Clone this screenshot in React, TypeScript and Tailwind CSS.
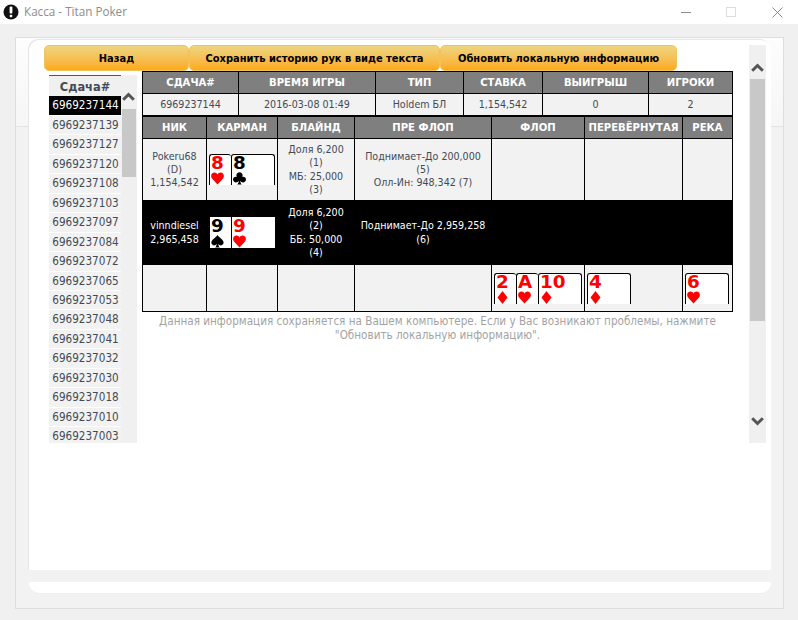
import React from "react";

type Suit = "h" | "d" | "c" | "s";

function SuitIcon({ suit, color }: { suit: Suit; color: string }) {
  const paths: Record<Suit, string> = {
    h: "M6.5 12.5 L1 6.5 C-0.6 4.5 0 1 3 0.6 C4.8 0.4 5.9 1.4 6.5 2.6 C7.1 1.4 8.2 0.4 10 0.6 C13 1 13.6 4.5 12 6.5 Z",
    d: "M6.5 0 L11.5 6.5 L6.5 13 L1.5 6.5 Z",
    c: "M6.5 0.2 C8.4 0.2 9.6 1.6 9.6 3.2 C9.6 3.9 9.4 4.4 9.1 4.9 C11.2 4.2 13 5.6 13 7.5 C13 9.3 11.5 10.4 10 10.4 C8.9 10.4 8 9.9 7.2 9 C7.3 10.4 7.7 11.3 8.8 12.6 L4.2 12.6 C5.3 11.3 5.7 10.4 5.8 9 C5 9.9 4.1 10.4 3 10.4 C1.5 10.4 0 9.3 0 7.5 C0 5.6 1.8 4.2 3.9 4.9 C3.6 4.4 3.4 3.9 3.4 3.2 C3.4 1.6 4.6 0.2 6.5 0.2 Z",
    s: "M6.5 0 C8 2.4 12.6 4.8 12.6 7.6 C12.6 9.4 11.3 10.4 10 10.4 C9 10.4 8 9.9 7.3 9 C7.4 10.4 7.8 11.3 8.8 12.6 L4.2 12.6 C5.2 11.3 5.6 10.4 5.7 9 C5 9.9 4 10.4 3 10.4 C1.7 10.4 0.4 9.4 0.4 7.6 C0.4 4.8 5 2.4 6.5 0 Z",
  };
  return (
    <svg width="13" height="13" viewBox="0 0 13 13" className="block">
      <path d={paths[suit]} fill={color} />
    </svg>
  );
}

function Card({
  rank,
  suit,
  narrow,
  last,
  dark,
}: {
  rank: string;
  suit: Suit;
  narrow?: boolean;
  last?: boolean;
  dark?: boolean;
}) {
  const red = suit === "h" || suit === "d";
  const color = red ? "#ff0000" : "#000000";
  return (
    <div
      className={`h-[31px] shrink-0 overflow-hidden bg-white border-l border-black ${
        last ? "border-r" : ""
      } ${narrow ? "w-[22px]" : "w-[44px]"} ${
        dark ? "pt-[1px]" : "border-t rounded-t-[3px]"
      } pl-[1px]`}
    >
      <div
        className="h-[16px] origin-left scale-x-[1.08] text-left whitespace-nowrap font-['DejaVu_Sans'] text-[17px] leading-[16px] font-bold"
        style={{ color }}
      >
        {rank}
      </div>
      <div className="mt-[1px]">
        <SuitIcon suit={suit} color={color} />
      </div>
    </div>
  );
}

function Chevron({ up }: { up?: boolean }) {
  return (
    <svg width="13" height="9" viewBox="0 0 13 9" className="block">
      <path
        d={up ? "M1.2 7.8 L6.5 2.5 L11.8 7.8" : "M1.2 1.2 L6.5 6.5 L11.8 1.2"}
        fill="none"
        stroke="#555555"
        strokeWidth="3"
      />
    </svg>
  );
}

const ids = [
  "6969237139",
  "6969237127",
  "6969237120",
  "6969237108",
  "6969237103",
  "6969237097",
  "6969237084",
  "6969237072",
  "6969237065",
  "6969237053",
  "6969237048",
  "6969237041",
  "6969237032",
  "6969237030",
  "6969237018",
  "6969237010",
  "6969237003",
];

const th =
  "p-0 border border-black bg-[#7f7f7f] text-white font-bold text-center align-middle text-[11.2px]";
const td = "p-0 border border-black bg-[#f2f2f2] text-center align-middle";
const tdBlack = "p-0 border border-black bg-black text-white text-center align-middle";

function GoldButton({ label, width }: { label: string; width: string }) {
  return (
    <button
      className={`${width} h-[26px] shrink-0 rounded-[5px] border border-[#efc35a] bg-gradient-to-b from-[#edd57f] to-[#fdaa0c] text-black font-bold text-[11px] leading-none`}
    >
      {label}
    </button>
  );
}

export default function App() {
  return (
    <div className="w-[798px] h-[620px] overflow-hidden bg-[#f0f0f0] font-['DejaVu_Sans_Condensed','DejaVu_Sans',sans-serif] text-[10.6px] leading-[13.3px] text-[#444a55]">
      {/* Title bar */}
      <div className="h-[24px] bg-white flex items-center pl-[3px]">
        <svg width="16" height="16" viewBox="0 0 16 16" className="block">
          <circle cx="8" cy="8" r="7.5" fill="#111111" />
          <rect x="6.6" y="2.6" width="2.8" height="7" rx="1" fill="#ffffff" />
          <rect x="6.8" y="10.8" width="2.4" height="2.4" fill="#ffffff" />
        </svg>
        <span className="ml-[5px] font-['Open_Sans',sans-serif] text-[11.7px] text-[#8c8c8c] leading-none">
          Касса - Titan Poker
        </span>
        <div className="ml-auto flex items-center">
          <div className="w-[10px] h-px bg-[#8a8a8a]" />
          <div className="ml-[35px] w-[10px] h-[10px] border border-[#dcdcdc]" />
          <svg width="11" height="11" viewBox="0 0 11 11" className="ml-[36px] mr-[15px] block">
            <path d="M0.5 0.5 L10.5 10.5 M10.5 0.5 L0.5 10.5" stroke="#8a8a8a" strokeWidth="1" />
          </svg>
        </div>
      </div>

      {/* Frame */}
      <div className="mt-[13px] ml-[15px] w-[769px] h-[572px] border border-[#dedede] pt-[2px] pl-[13px] bg-[linear-gradient(#fdfdfd_0,#f6f6f6_88px,#e3e3e3_88px,#e3e3e3_89px,#f2f2f2_89px)]">
        {/* Main panel */}
        <div className="w-[742px] h-[530px] bg-white rounded-t-[10px] pt-[5px] pl-[15px] flex shadow-[-1px_-1px_0_#e6e6e6]">
          <div className="w-[705px] shrink-0">
            <div className="flex h-[26px]">
              <GoldButton label="Назад" width="w-[145px]" />
              <GoldButton label="Сохранить историю рук в виде текста" width="w-[251px]" />
              <GoldButton label="Обновить локальную информацию" width="w-[237px]" />
            </div>
            <div className="flex">
              {/* Hand list */}
              <div className="ml-[5px] mt-[4px] w-[88px] h-[368px] flex overflow-hidden shrink-0 text-[11.6px] leading-[18.44px]">
                <div className="w-[72px]">
                  <div className="h-[21px] bg-[#f0f0f0] border-t border-[#555555] text-center font-bold text-[12.7px] leading-[21px]">
                    Сдача#
                  </div>
                  <div className="h-[19px] bg-black text-white pl-[1px] text-center">6969237144</div>
                  {ids.map((id) => (
                    <div key={id} className="mt-[1px] h-[18.44px] bg-[#f2f2f2] pl-[1px] text-center">
                      {id}
                    </div>
                  ))}
                </div>
                <div className="w-[16px] bg-[#f0f0f0] pt-[17px]">
                  <div className="pl-[1px]">
                    <Chevron up />
                  </div>
                  <div className="mt-[8px] ml-[1px] w-[14px] h-[68px] bg-[#c8c8c8]" />
                </div>
              </div>
              {/* Tables */}
              <div className="ml-[5px] w-[591px] shrink-0">
                <table className="w-[591px] table-fixed border-collapse">
                  <colgroup>
                    <col className="w-[96px]" />
                    <col className="w-[137px]" />
                    <col className="w-[88px]" />
                    <col className="w-[79px]" />
                    <col className="w-[106px]" />
                    <col className="w-[84px]" />
                  </colgroup>
                  <tbody className="[&>tr>*]:pt-[1px]">
                    <tr className="h-[22px]">
                      <th className={th}>СДАЧА#</th>
                      <th className={th}>ВРЕМЯ ИГРЫ</th>
                      <th className={th}>ТИП</th>
                      <th className={th}>СТАВКА</th>
                      <th className={th}>ВЫИГРЫШ</th>
                      <th className={th}>ИГРОКИ</th>
                    </tr>
                    <tr className="h-[22px]">
                      <td className={td}>6969237144</td>
                      <td className={td}>2016-03-08 01:49</td>
                      <td className={td}>Holdem БЛ</td>
                      <td className={td}>1,154,542</td>
                      <td className={td}>0</td>
                      <td className={td}>2</td>
                    </tr>
                  </tbody>
                </table>
                <table className="w-[591px] table-fixed border-collapse">
                  <colgroup>
                    <col className="w-[64px]" />
                    <col className="w-[71px]" />
                    <col className="w-[77px]" />
                    <col className="w-[137px]" />
                    <col className="w-[93px]" />
                    <col className="w-[98px]" />
                    <col className="w-[50px]" />
                  </colgroup>
                  <tbody>
                    <tr className="h-[22px]">
                      <th className={th}>НИК</th>
                      <th className={th}>КАРМАН</th>
                      <th className={th}>БЛАЙНД</th>
                      <th className={th}>ПРЕ ФЛОП</th>
                      <th className={th}>ФЛОП</th>
                      <th className={th}>ПЕРЕВЁРНУТАЯ</th>
                      <th className={th}>РЕКА</th>
                    </tr>
                    <tr className="h-[62px]">
                      <td className={td}>
                        Pokeru68
                        <br />
                        (D)
                        <br />
                        1,154,542
                      </td>
                      <td className={td}>
                        <div className="flex pl-[2px]">
                          <Card rank="8" suit="h" narrow />
                          <Card rank="8" suit="c" last />
                        </div>
                      </td>
                      <td className={td}>
                        Доля 6,200
                        <br />
                        (1)
                        <br />
                        МБ: 25,000
                        <br />
                        (3)
                      </td>
                      <td className={td}>
                        Поднимает-До 200,000
                        <br />
                        (5)
                        <br />
                        Олл-Ин: 948,342 (7)
                      </td>
                      <td className={td} />
                      <td className={td} />
                      <td className={td} />
                    </tr>
                    <tr className="h-[64px]">
                      <td className={tdBlack}>
                        vinndiesel
                        <br />
                        2,965,458
                      </td>
                      <td className={tdBlack}>
                        <div className="flex pl-[2px]">
                          <Card rank="9" suit="s" narrow dark />
                          <Card rank="9" suit="h" dark />
                        </div>
                      </td>
                      <td className={tdBlack}>
                        Доля 6,200
                        <br />
                        (2)
                        <br />
                        ББ: 50,000
                        <br />
                        (4)
                      </td>
                      <td className={tdBlack}>
                        Поднимает-До 2,959,258
                        <br />
                        (6)
                      </td>
                      <td className={tdBlack} />
                      <td className={tdBlack} />
                      <td className={tdBlack} />
                    </tr>
                    <tr className="h-[47px]">
                      <td className={td} />
                      <td className={td} />
                      <td className={td} />
                      <td className={td} />
                      <td className={td}>
                        <div className="flex pl-[2px]">
                          <Card rank="2" suit="d" narrow />
                          <Card rank="A" suit="h" narrow />
                          <Card rank="10" suit="d" last />
                        </div>
                      </td>
                      <td className={td}>
                        <div className="flex pl-[2px]">
                          <Card rank="4" suit="d" last />
                        </div>
                      </td>
                      <td className={td}>
                        <div className="flex pl-[2px]">
                          <Card rank="6" suit="h" last />
                        </div>
                      </td>
                    </tr>
                  </tbody>
                </table>
                <p className="mt-[2px] text-center text-[#a3a3a3] text-[11.6px] leading-[14px]">
                  Данная информация сохраняется на Вашем компьютере. Если у Вас возникают проблемы, нажмите
                  <br />
                  "Обновить локальную информацию".
                </p>
              </div>
            </div>
          </div>
          {/* Main scrollbar */}
          <div className="w-[17px] h-[398px] bg-[#f0f0f0] flex flex-col items-center shrink-0">
            <div className="mt-[18px]">
              <Chevron up />
            </div>
            <div className="mt-[7px] w-[15px] h-[242px] bg-[#c8c8c8]" />
            <div className="mt-[96px]">
              <Chevron />
            </div>
          </div>
        </div>
        {/* Bottom strip */}
        <div className="mt-[12px] w-[742px] h-[11px] bg-white rounded-b-[10px] shadow-[0_1px_0_#eeeeee]" />
      </div>
    </div>
  );
}
